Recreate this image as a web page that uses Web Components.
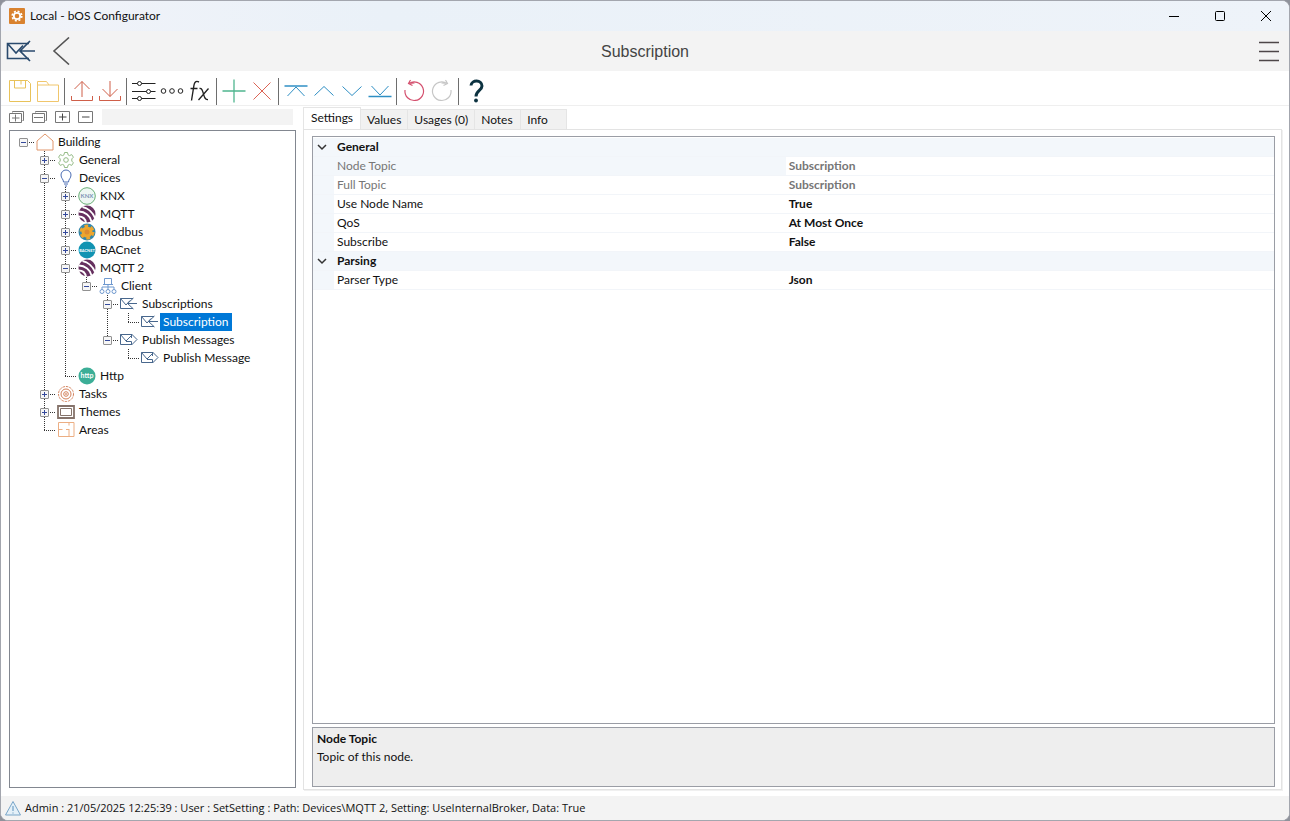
<!DOCTYPE html>
<html lang="en">

<head>
  <meta charset="UTF-8">
  <meta name="viewport" content="width=device-width, initial-scale=1.0">
  <title>Local - bOS Configurator</title>
  <style>
    html,
    body {
      height: 100%;
      margin: 0;
    }

    body {
      background: #8f929b;
      color: #111;
      font: 12px/18px Lato, "Open Sans", sans-serif;
    }
  </style>
</head>

<body>
  <app-window>
    <title-bar slot="title">Local - bOS Configurator</title-bar>
    <page-header slot="header">Subscription</page-header>

    <tool-bar slot="tools">
      <tool-button icon="save" label="Save"></tool-button>
      <tool-button icon="folder" label="Open"></tool-button>
      <tool-separator></tool-separator>
      <tool-button icon="upload" label="Export"></tool-button>
      <tool-button icon="download" label="Import"></tool-button>
      <tool-separator></tool-separator>
      <tool-button icon="sliders" label="Settings"></tool-button>
      <tool-button icon="dots" label="Values"></tool-button>
      <tool-button icon="fx" label="Expression"></tool-button>
      <tool-separator></tool-separator>
      <tool-button icon="plus" label="Add"></tool-button>
      <tool-button icon="cross" label="Delete"></tool-button>
      <tool-separator></tool-separator>
      <tool-button icon="top" label="Move to top"></tool-button>
      <tool-button icon="up" label="Move up"></tool-button>
      <tool-button icon="down" label="Move down"></tool-button>
      <tool-button icon="bottom" label="Move to bottom"></tool-button>
      <tool-separator></tool-separator>
      <tool-button icon="undo" label="Undo"></tool-button>
      <tool-button icon="redo" label="Redo"></tool-button>
      <tool-separator></tool-separator>
      <tool-button icon="help" label="Help"></tool-button>
    </tool-bar>

    <tree-view slot="tree">
      <tree-node icon="house" label="Building" state="open" root>
        <tree-node icon="gear" label="General" state="closed"></tree-node>
        <tree-node icon="bulb" label="Devices" state="open">
          <tree-node icon="knx" label="KNX" state="closed"></tree-node>
          <tree-node icon="mqtt" label="MQTT" state="closed"></tree-node>
          <tree-node icon="modbus" label="Modbus" state="closed"></tree-node>
          <tree-node icon="bacnet" label="BACnet" state="closed"></tree-node>
          <tree-node icon="mqtt" label="MQTT 2" state="open">
            <tree-node icon="client" label="Client" state="open">
              <tree-node icon="mailin" label="Subscriptions" state="open">
                <tree-node icon="mailin" label="Subscription" selected></tree-node>
              </tree-node>
              <tree-node icon="mailout" label="Publish Messages" state="open">
                <tree-node icon="mailout" label="Publish Message"></tree-node>
              </tree-node>
            </tree-node>
          </tree-node>
          <tree-node icon="http" label="Http"></tree-node>
        </tree-node>
        <tree-node icon="target" label="Tasks" state="closed"></tree-node>
        <tree-node icon="frame" label="Themes" state="closed"></tree-node>
        <tree-node icon="plan" label="Areas"></tree-node>
      </tree-node>
    </tree-view>

    <tab-panel slot="detail">
      <tab-item slot="tabs" selected>Settings</tab-item>
      <tab-item slot="tabs">Values</tab-item>
      <tab-item slot="tabs">Usages (0)</tab-item>
      <tab-item slot="tabs">Notes</tab-item>
      <tab-item slot="tabs">Info</tab-item>
      <property-grid></property-grid>
      <property-help>
        <span slot="name">Node Topic</span>
        Topic of this node.
      </property-help>
    </tab-panel>

    <status-bar slot="status">Admin : 21/05/2025 12:25:39 : User : SetSetting : Path: Devices\MQTT 2, Setting:
      UseInternalBroker, Data: True</status-bar>
  </app-window>

  <template id="app-window">
    <style>
      :host {
        display: flex;
        flex-direction: column;
        box-sizing: border-box;
        min-height: 100%;
        overflow: hidden;
        background: #fff;
        border: 1px solid #a3a6ae;
        border-radius: 8px;
      }

      main {
        flex: 1;
        display: grid;
        grid-template-columns: 302px 1fr;
      }
    </style>
    <slot name="title"></slot>
    <slot name="header"></slot>
    <slot name="tools"></slot>
    <main>
      <slot name="tree"></slot>
      <slot name="detail"></slot>
    </main>
    <slot name="status"></slot>
  </template>

  <template id="title-bar">
    <style>
      :host {
        display: flex;
        align-items: center;
        height: 30px;
        padding-left: 8px;
        background: linear-gradient(90deg, #f1f3f9, #eaf1f8 30%, #eef3f9);
      }

      .name {
        flex: 1;
        padding-left: 5px;
      }

      button {
        display: flex;
        align-items: center;
        justify-content: center;
        width: 46px;
        height: 30px;
        padding: 0;
        border: 0;
        background: none;
      }
    </style>
    <ui-icon name="app" size="16"></ui-icon>
    <span class="name"><slot></slot></span>
    <button aria-label="Minimize"><ui-icon name="minimize" size="12"></ui-icon></button>
    <button aria-label="Maximize"><ui-icon name="maximize" size="12"></ui-icon></button>
    <button aria-label="Close"><ui-icon name="close" size="12"></ui-icon></button>
  </template>

  <template id="page-header">
    <style>
      :host {
        display: grid;
        grid-template-columns: 1fr auto 1fr;
        align-items: center;
        height: 40px;
        padding: 0 4px;
        background: #f3f3f3;
      }

      h1 {
        margin: 0;
        padding-top: 2px;
        color: #444;
        font: 16px/20px "Liberation Sans", Arial, sans-serif;
      }

      .side {
        display: flex;
        align-items: center;
        gap: 12px;
      }

      .end {
        justify-content: flex-end;
        padding-right: 4px;
      }

      button {
        display: flex;
        padding: 0;
        border: 0;
        background: none;
      }
    </style>
    <div class="side">
      <ui-icon name="mailbig" size="32"></ui-icon>
      <button aria-label="Back"><ui-icon name="back" size="28"></ui-icon></button>
    </div>
    <h1><slot></slot></h1>
    <div class="side end">
      <button aria-label="Menu"><ui-icon name="menu" size="24"></ui-icon></button>
    </div>
  </template>

  <template id="tool-bar">
    <style>
      :host {
        display: flex;
        align-items: center;
        height: 28px;
        padding: 6px 0 0 5px;
        border-bottom: 1px solid #efefef;
      }
    </style>
    <slot></slot>
  </template>

  <template id="tool-button">
    <style>
      :host {
        display: block;
      }

      button {
        display: flex;
        align-items: center;
        justify-content: center;
        width: 28px;
        height: 28px;
        padding: 0;
        border: 0;
        background: none;
      }
    </style>
    <button><ui-icon size="24"></ui-icon></button>
  </template>

  <template id="tool-separator">
    <style>
      :host {
        display: block;
        width: 1px;
        height: 27px;
        margin: 0 3px 0 2px;
        background: #6e6e6e;
      }
    </style>
  </template>

  <template id="tree-view">
    <style>
      :host {
        display: flex;
        flex-direction: column;
        padding: 0 7px 8px 8px;
      }

      .tools {
        display: flex;
        align-items: center;
        gap: 7px;
        height: 22px;
        padding-bottom: 2px;
      }

      .tools button {
        display: flex;
        padding: 0;
        border: 0;
        background: none;
      }

      .rest {
        flex: 1;
        height: 16px;
        margin: 0 3px 0 1px;
        background: #f3f3f3;
      }

      .box {
        flex: 1;
        padding: 2px 0 0 8px;
        border: 1px solid #828790;
      }
    </style>
    <div class="tools">
      <button aria-label="Expand all"><ui-icon name="expandall" size="16"></ui-icon></button>
      <button aria-label="Collapse all"><ui-icon name="collapseall" size="16"></ui-icon></button>
      <button aria-label="Expand"><ui-icon name="expand" size="16"></ui-icon></button>
      <button aria-label="Collapse"><ui-icon name="collapse" size="16"></ui-icon></button>
      <span class="rest"></span>
    </div>
    <div class="box" role="tree"><slot></slot></div>
  </template>

  <template id="tree-node">
    <style>
      /* the dotted trunk runs down through every sibling and stops halfway the last one */
      :host {
        display: block;
        background: repeating-linear-gradient(#333 0 1px, transparent 1px 2px) 5px 0 / 1px 100% no-repeat;
      }

      :host(:last-child) {
        background-size: 1px 10px;
      }

      :host([root]) {
        background: none;
      }

      .row {
        display: flex;
        align-items: center;
        height: 18px;
      }

      .branch {
        display: flex;
        align-items: center;
        width: 17px;
        height: 18px;
        padding-left: 1px;
        background: repeating-linear-gradient(90deg, #333 0 1px, transparent 1px 2px) 5px 9px / 12px 1px no-repeat;
      }

      .branch button {
        width: 9px;
        height: 9px;
        padding: 0;
        border: 1px solid #919191;
        border-radius: 1px;
        background:
          linear-gradient(#34499b, #34499b) center / 5px 1px no-repeat,
          #f6f6f6;
      }

      :host([state="closed"]) .branch button {
        background:
          linear-gradient(#34499b, #34499b) center / 5px 1px no-repeat,
          linear-gradient(#34499b, #34499b) center / 1px 5px no-repeat,
          #f6f6f6;
      }

      :host(:not([state])) .branch button {
        display: none;
      }

      .label {
        margin-left: 1px;
        padding: 0 3px;
        white-space: nowrap;
      }

      :host([selected]) .label {
        background: #0078d7;
        color: #fff;
      }

      .children {
        padding-left: 21px;
      }
    </style>
    <div class="row">
      <span class="branch"><button aria-label="Toggle"></button></span>
      <ui-icon size="18"></ui-icon>
      <span class="label"></span>
    </div>
    <div class="children"><slot></slot></div>
  </template>

  <template id="tab-panel">
    <style>
      :host {
        display: flex;
        flex-direction: column;
        padding: 1px 7px 6px 0;
      }

      .tabs {
        display: flex;
        align-items: flex-end;
        height: 22px;
      }

      .panel {
        flex: 1;
        display: flex;
        flex-direction: column;
        gap: 3px;
        padding: 6px 6px 2px 8px;
        border: 1px solid #e3e3e3;
        box-shadow: 1px 1px 0 #f0f0f0;
      }
    </style>
    <div class="tabs" role="tablist"><slot name="tabs"></slot></div>
    <div class="panel"><slot></slot></div>
  </template>

  <template id="tab-item">
    <style>
      :host {
        display: block;
      }

      button {
        display: block;
        min-width: 46px;
        height: 20px;
        padding: 0 6px;
        border: 1px solid #e5e5e5;
        border-width: 1px 1px 0 0;
        background: #f1f1f1;
        color: inherit;
        font: inherit;
        text-align: left;
      }

      :host([selected]) {
        margin-bottom: -1px;
      }

      :host([selected]) button {
        height: 23px;
        padding: 0 7px 3px;
        border-left-width: 1px;
        background: #fff;
      }
    </style>
    <button role="tab"><slot></slot></button>
  </template>

  <template id="property-grid">
    <style>
      :host {
        display: block;
        flex: 1;
        padding-top: 1px;
        border: 1px solid #9a9da5;
      }

      table {
        width: 100%;
        border-collapse: collapse;
        table-layout: fixed;
      }

      col.gutter {
        width: 21px;
      }

      col.name {
        width: 47%;
      }

      td,
      th {
        height: 18px;
        padding: 0 3px;
        border-bottom: 1px solid #f2f5f9;
        font-weight: normal;
        line-height: 18px;
        text-align: left;
      }

      td {
        font-weight: bold;
      }

      .group th,
      .gutter,
      .current th {
        background: #f3f7fb;
      }

      .group th {
        font-weight: bold;
      }

      .readonly th,
      .readonly td {
        color: #767676;
      }

      button {
        display: flex;
        padding: 0;
        border: 0;
        background: none;
      }
    </style>
    <table>
      <colgroup>
        <col class="gutter">
        <col class="name">
        <col>
      </colgroup>
      <tbody></tbody>
    </table>
  </template>

  <template id="property-help">
    <style>
      :host {
        display: block;
        box-sizing: border-box;
        height: 60px;
        padding: 2px 4px;
        border: 1px solid #9a9da5;
        background: #eee;
      }

      strong {
        display: block;
      }
    </style>
    <strong><slot name="name"></slot></strong>
    <slot></slot>
  </template>

  <template id="status-bar">
    <style>
      :host {
        display: flex;
        align-items: center;
        gap: 4px;
        height: 24px;
        padding-left: 4px;
        background: #f3f3f3;
        font: 11px/18px "Open Sans", sans-serif;
      }
    </style>
    <ui-icon name="warning" size="16"></ui-icon>
    <span><slot></slot></span>
  </template>

  <script>
    // name: [viewBox size, default stroke, markup]
    const ICONS = {
      app: [16, "none", `<rect width="16" height="16" rx="1" fill="#d9822f"/>
        <circle cx="8" cy="8" r="4.8" fill="none" stroke="#fff" stroke-width="1.6" stroke-dasharray="2 1.77"/>
        <circle cx="8" cy="8" r="3.2" fill="none" stroke="#fff" stroke-width="1.8"/>`],
      minimize: [12, "#000", '<path d="M1 6.5h10"/>'],
      maximize: [12, "#000", '<rect x="1.5" y="1.5" width="9" height="9" rx="1"/>'],
      close: [12, "#000", '<path d="M1 1l10 10M11 1l-10 10"/>'],
      back: [28, "#555", '<path d="M20 .5L5 14 20 27.500" stroke-width="1.6"/>'],
      menu: [24, "#4d4648", '<path d="M2 3.500h20M2 12.500h20M2 21.500h20" stroke-width="1.6"/>'],
      mailbig: [32, "#2a4a6d", `<path d="M24 8.500H2.500v15H24M2.500 8.500L11 18l7-7.500" stroke-width="1.600"/>
        <path d="M15 16h15M25 6L15 16l10 10" stroke-width="1.700"/>`],
      save: [24, "#e8c25a", '<path d="M1.500 1.500h18l3 3v18h-21zM6.500 1.500v7.500h11v-7.500M13 1.500v4"/>'],
      folder: [24, "#f0c66c", '<path d="M1.500 22.500v-20h9l2.500 3.500h9.500v16.500zM1.500 6h11.500"/>'],
      upload: [24, "#cf5f49", '<path d="M1.500 17v4.500h21v-4.500M12 18V2.500M4.500 10L12 2.500l7.500 7.500"/>'],
      download: [24, "#cf5f49", '<path d="M1.500 17v4.500h21v-4.500M12 2v15.500M4.500 10L12 17.500l7.500-7.500"/>'],
      sliders: [24, "#222", `<path d="M0 4.500h5.500M9.500 4.500h14M0 12.500h14.500M18.500 12.500h5M0 19.500h5.500M9.500 19.500h14"/>
        <circle cx="7.500" cy="4.500" r="2"/><circle cx="16.500" cy="12.500" r="2"/><circle cx="7.500" cy="19.500" r="2"/>`],
      dots: [24, "#222", '<circle cx="3.500" cy="12" r="2.300"/><circle cx="12" cy="12" r="2.300"/><circle cx="20.500" cy="12" r="2.300"/>'],
      fx: [24, "#222", `<path d="M11 3c-3-1.500-4.500 0-5 3L3.500 21.500M2.500 9.500h7" stroke-width="1.400"/>
        <path d="M11.500 9.500c2.500-.5 3 2 4 5.500s1.500 6 4.500 5.500M20.500 9.500L10.500 21" stroke-width="1.300"/>`],
      plus: [24, "#4fb58f", '<path d="M.5 12h23M12 .5v23" stroke-width="1.300"/>'],
      cross: [24, "#dc6455", '<path d="M3.500 3.500l17 17M20.500 3.500l-17 17"/>'],
      top: [24, "#2f8fc4", '<path d="M.5 7h23" stroke-width="1.600"/><path d="M3.500 17L12 8l8.500 9"/>'],
      up: [24, "#2f8fc4", '<path d="M2.500 16.500L12 7.500l9.500 9"/>'],
      down: [24, "#2f8fc4", '<path d="M2.500 7.500L12 16.500l9.500-9"/>'],
      bottom: [24, "#2f8fc4", '<path d="M.5 17.500h23" stroke-width="1.600"/><path d="M3.500 7L12 16l8.500-9"/>'],
      undo: [24, "#d4506e", '<path d="M7 4.500A9.300 9.300 0 1 1 3 11M8.500 1L6.500 4.500l4 2M6.500 4.500L12.500 4" stroke-width="1.200"/>'],
      redo: [24, "#c6c6c6", '<path d="M17 4.500A9.300 9.300 0 1 0 21 11M15.500 1l2 3.500-4 2M17.500 4.500L11.500 4" stroke-width="1.200"/>'],
      help: [24, "#0d3341", `<path d="M7 6.500c.5-6 11-6 11 .5 0 4.500-6 4.500-6 10.500" stroke-width="3"/>
        <circle cx="12" cy="21.500" r="1.900" fill="#0d3341" stroke="none"/>`],
      expandall: [16, "#777", '<path d="M3.500 3.500v-1h11v9h-1M.500 4.500h12v9h-12zM3 9h7.500M6.500 5.500v7"/>'],
      collapseall: [16, "#777", '<path d="M3.500 3.500v-1h11v9h-1M.500 4.500h12v9h-12zM2 8.500h9"/>'],
      expand: [16, "#777", '<path d="M.5 2.500h14v11h-14z"/><path d="M4 8h7.500M7.500 4.500v7" stroke="#444"/>'],
      collapse: [16, "#777", '<path d="M.5 2.500h14v11h-14z"/><path d="M4 8h7.500" stroke="#444"/>'],
      house: [18, "#e0956a", '<path d="M1 8L9 1l8 7v9h-16z"/>'],
      gear: [18, "#93ba85", `<circle cx="9" cy="9" r="2.300"/>
        <path d="M7.500 1.500h3l.5 2.300 1.500.8 2.200-1 1.700 2.600-1.600 1.700v2.200l1.600 1.700-1.700 2.600-2.200-1-1.500.8-.5 2.300h-3l-.5-2.300-1.500-.8-2.200 1-1.700-2.600 1.600-1.700v-2.200l-1.600-1.700 1.700-2.600 2.200 1 1.500-.8z"/>`],
      bulb: [18, "#4a6cb3", '<path d="M6.500 13c0-3-2.500-3.500-2.500-7a5 5 0 0 1 10 0c0 3.500-2.500 4-2.500 7zM7 15h4M8 17h2"/>'],
      knx: [18, "#69ae76", `<circle cx="9" cy="9" r="8.300" fill="#eef7f3"/>
        <text x="9" y="11" font-size="6" font-weight="bold" text-anchor="middle" fill="#7d93b5" stroke="none">KNX</text>`],
      mqtt: [18, "none", `<circle cx="9" cy="9" r="8.500" fill="#66305f"/>
        <g fill="none" stroke="#fff" stroke-width="1.800"><path d="M.5 11.500c4 0 7 2.500 7.500 6.500"/>
        <path d="M1 6.500c6 0 11.500 4.500 12.500 10"/><path d="M4.500 2c5.500 1 10.500 5.500 12.500 11"/></g>`],
      modbus: [18, "none", `<circle cx="9" cy="9" r="8.500" fill="#3187ae"/>
        <circle cx="9" cy="9" r="5.500" fill="#eda62f"/>
        <circle cx="9" cy="9" r="6" fill="none" stroke="#eda62f" stroke-width="3" stroke-dasharray="3.600 2.680"/>
        <circle cx="9" cy="9" r="2.500" fill="#dc8b32"/>`],
      bacnet: [18, "none", `<circle cx="9" cy="9" r="8.500" fill="#1193b2"/>
        <text x="9" y="11" font-size="4" font-weight="bold" text-anchor="middle" fill="#fff">BACNET</text>`],
      http: [18, "none", `<circle cx="9" cy="9" r="8.500" fill="#3cae97"/>
        <text x="9" y="11" font-size="7" font-weight="bold" text-anchor="middle" fill="#fff">http</text>`],
      client: [18, "#6f99cf", `<path d="M5.500 1.500h7v6h-7zM4 7.500h10M9 7.500v5M3 12.500v-2.500h12v2.500"/>
        <circle cx="3" cy="14.500" r="2"/><circle cx="9" cy="14.500" r="2"/><circle cx="15" cy="14.500" r="2"/>`],
      mailin: [18, "#48678d", '<path d="M13 3.500H.5v10H13M.5 3.500L6 10l4-4.500M7.500 8.500H17M13.500 3L7.500 8.500l6 5.500"/>'],
      mailout: [18, "#48678d", '<path d="M11.500 3.500H.5v10h11M.5 3.500L6 10l5.500-5.500M6 10.500h5.500v3.500L17 8.500 11.500 3v4"/>'],
      target: [18, "#d3805a", '<circle cx="9" cy="9" r="7.500" stroke-dasharray="2.500 1"/><circle cx="9" cy="9" r="5"/><circle cx="9" cy="9" r="2.300"/><circle cx="9" cy="9" r=".5"/>'],
      frame: [18, "#85736b", '<path d="M1 3h16v12h-16z" stroke-width="1.800"/><path d="M3.500 5.500h11v7h-11z"/>'],
      plan: [18, "#ecae83", '<path d="M1.500 1.500h15.500v14h-15.500zM1.500 8.500h4M9 8.500h3M12 1.500v3M12 8v7.500"/>'],
      warning: [16, "#78a5c8", '<path d="M8 1.500L15.500 15h-15z" fill="#e4f0f8"/><path d="M8 6v5M8 12.500v1" stroke-width="1.300"/>'],
      chevron: [12, "#333", '<path d="M2 4l4 4 4-4" stroke-width="1.500"/>'],
    }

    const PROPERTIES = [
      {
        group: "General",
        rows: [
          { name: "Node Topic", value: "Subscription", style: "readonly current" },
          { name: "Full Topic", value: "Subscription", style: "readonly" },
          { name: "Use Node Name", value: "True" },
          { name: "QoS", value: "At Most Once" },
          { name: "Subscribe", value: "False" },
        ],
      },
      {
        group: "Parsing",
        rows: [
          { name: "Parser Type", value: "Json" },
        ],
      },
    ]

    // every element clones the template that has its own tag name
    class BaseElement extends HTMLElement {
      constructor() {
        super()
        const template = document.getElementById(this.localName)
        this.attachShadow({ mode: "open" })
        this.shadowRoot.appendChild(template.content.cloneNode(true))
      }
    }

    customElements.define("ui-icon", class extends HTMLElement {
      static observedAttributes = ["name", "size"]

      constructor() {
        super()
        this.attachShadow({ mode: "open" })
      }

      attributeChangedCallback() {
        const icon = ICONS[this.getAttribute("name")]
        if (!icon) return
        const size = this.getAttribute("size")
        const [box, stroke, markup] = icon
        this.shadowRoot.innerHTML = `
          <style>:host { display: block; flex: none; } svg { display: block; }</style>
          <svg width="${size}" height="${size}" viewBox="0 0 ${box} ${box}" fill="none" stroke="${stroke}" aria-hidden="true">${markup}</svg>`
      }
    })

    customElements.define("tool-button", class extends BaseElement {
      connectedCallback() {
        this.shadowRoot.querySelector("ui-icon").setAttribute("name", this.getAttribute("icon"))
        this.shadowRoot.querySelector("button").setAttribute("aria-label", this.getAttribute("label"))
      }
    })

    customElements.define("tree-node", class extends BaseElement {
      connectedCallback() {
        this.setAttribute("role", "treeitem")
        this.shadowRoot.querySelector("ui-icon").setAttribute("name", this.getAttribute("icon"))
        this.shadowRoot.querySelector(".label").textContent = this.getAttribute("label")
      }
    })

    customElements.define("property-grid", class extends BaseElement {
      connectedCallback() {
        const rows = PROPERTIES.map(({ group, rows }) => `
          <tr class="group">
            <th><button aria-label="Collapse ${group}"><ui-icon name="chevron" size="12"></ui-icon></button></th>
            <th colspan="2">${group}</th>
          </tr>
          ${rows.map(({ name, value, style = "" }) => `
            <tr class="${style}">
              <td class="gutter"></td>
              <th scope="row">${name}</th>
              <td>${value}</td>
            </tr>`).join("")}`)
        this.shadowRoot.querySelector("tbody").innerHTML = rows.join("")
      }
    })

    const plain = [
      "app-window", "title-bar", "page-header", "tool-bar", "tool-separator", "tree-view",
      "tab-panel", "tab-item", "property-help", "status-bar",
    ]
    plain.forEach((name) => customElements.define(name, class extends BaseElement { }))
  </script>
</body>

</html>
